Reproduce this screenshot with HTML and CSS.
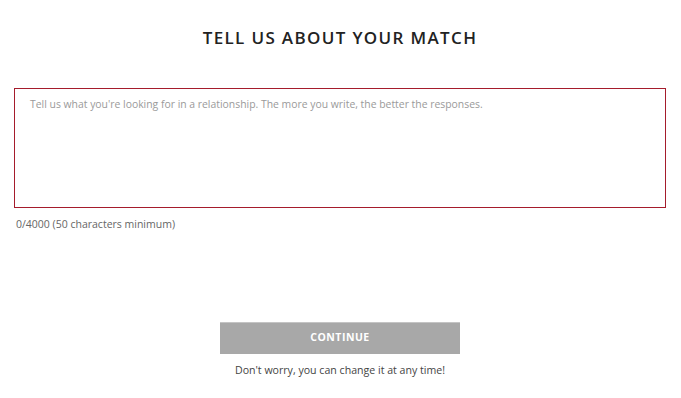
FILE: index.html
```html
<!DOCTYPE html>
<html lang="en">
<head>
<meta charset="utf-8">
<title>Tell us about your match</title>
<link rel="stylesheet" href="styles.css">
</head>
<body>
<main class="page">
  <h1 class="title">TELL US ABOUT YOUR MATCH</h1>
  <textarea class="essay" placeholder="Tell us what you're looking for in a relationship. The more you write, the better the responses."></textarea>
  <div class="counter">0/4000 (50 characters minimum)</div>
  <div class="actions">
    <button class="continue" type="button">CONTINUE</button>
    <p class="note">Don't worry, you can change it at any time!</p>
  </div>
</main>
</body>
</html>
```

FILE: styles.css
```css
html, body {
  margin: 0;
  padding: 0;
  background: #ffffff;
}
body {
  font-family: "Open Sans", "Noto Sans", sans-serif;
  color: #333;
}
.page {
  padding: 0 15px 0 14px;
  display: flex;
  flex-direction: column;
}
.title {
  margin: 26px 0 0;
  text-align: center;
  font-size: 17px;
  font-weight: 600;
  letter-spacing: 1.35px;
  line-height: 24px;
  color: #222;
}
.essay {
  margin-top: 38px;
  box-sizing: border-box;
  width: 100%;
  height: 120px;
  border: 1px solid #a51c2c;
  padding: 8px 15px;
  resize: none;
  font-family: inherit;
  font-size: 10.4px;
  color: #333;
  outline: none;
}
.essay::placeholder {
  color: #9a9a9a;
}
.counter {
  margin-top: 9px;
  padding-left: 2px;
  font-size: 10.5px;
  color: #666;
  line-height: 14px;
}
.actions {
  margin-top: 91px;
  display: flex;
  flex-direction: column;
  align-items: center;
}
.continue {
  width: 240px;
  height: 32px;
  background: #a8a8a8;
  border: 0;
  border-top: 1px solid #c4c4c4;
  color: #fff;
  padding: 0 0 3px;
  font-family: inherit;
  font-size: 10.5px;
  font-weight: 700;
  letter-spacing: 0.5px;
}
.note {
  margin: 9px 0 0;
  font-size: 10.6px;
  color: #444;
  line-height: 14px;
}
```
